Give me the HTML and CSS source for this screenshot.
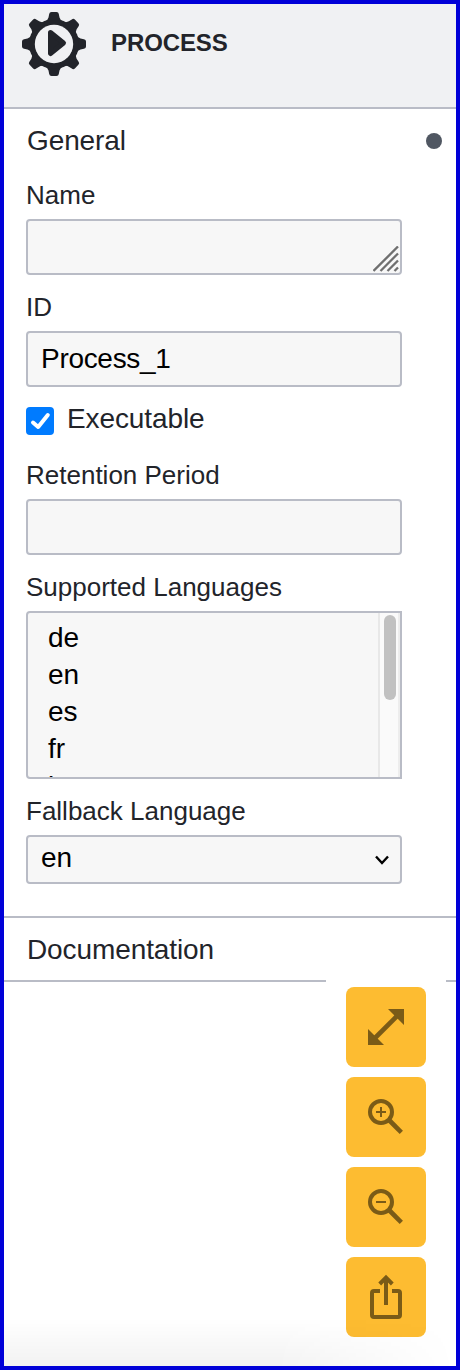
FILE: index.html
```html
<!DOCTYPE html>
<html lang="en">
  <head>
    <meta charset="UTF-8" />
    <meta name="viewport" content="width=device-width, initial-scale=1.0" />
    <title>Process properties</title>
    <link rel="stylesheet" href="styles.css">
  </head>

  <body>
    <div class="panel">
      <header class="panel-header">
        <svg class="gear" viewBox="0 0 64 64" width="64" height="64">
          <g fill="#22242a">
            <g id="teeth">
              <path id="tooth" d="M22.5 10 Q26 8 26.5 5.5 L27.2 2 Q27.5 0 29.5 0 H34.5 Q36.5 0 36.8 2 L37.5 5.5 Q38 8 41.5 10 Z" />
              <use href="#tooth" transform="rotate(45 32 32)" />
              <use href="#tooth" transform="rotate(90 32 32)" />
              <use href="#tooth" transform="rotate(135 32 32)" />
            </g>
            <use href="#teeth" transform="rotate(180 32 32)" />
            <circle cx="32" cy="32" r="25" />
          </g>
          <circle cx="32" cy="32" r="19.2" fill="#f0f1f3" />
          <path d="M28.5 20.5 L41.5 31 L28.5 41.5 Z" fill="#22242a" stroke="#22242a" stroke-width="5" stroke-linejoin="round" />
        </svg>
        <h1>PROCESS</h1>
      </header>

      <section class="group">
        <h2 class="group-title">General <span class="dot"></span></h2>
        <div class="fields">
          <div class="field">
            <label>Name</label>
            <div class="input textarea">
              <svg width="26" height="26" viewBox="0 0 26 26" stroke="#6f6f6f" stroke-width="2.3">
                <path d="M0.5 25 L25 0.5 M7.5 25 L25 7.5 M14.5 25 L25 14.5 M21.5 25 L25 21.5" />
              </svg>
            </div>
          </div>
          <div class="field">
            <label>ID</label>
            <div class="input process-id">Process_1</div>
          </div>
          <div class="field check">
            <span class="checkbox">
              <svg width="28" height="28" viewBox="0 0 28 28" fill="none" stroke="#fff" stroke-width="4" stroke-linecap="round" stroke-linejoin="round">
                <path d="M7 15.5 L12.2 20 L21.8 8" />
              </svg>
            </span>
            <span>Executable</span>
          </div>
          <div class="field">
            <label>Retention Period</label>
            <div class="input"></div>
          </div>
          <div class="field">
            <label>Supported Languages</label>
            <div class="listbox">
              <ul>
                <li>de</li>
                <li>en</li>
                <li>es</li>
                <li>fr</li>
                <li>it</li>
              </ul>
              <div class="track"><div class="thumb"></div></div>
            </div>
          </div>
          <div class="field">
            <label>Fallback Language</label>
            <div class="input select">
              <span>en</span>
              <svg width="16" height="10" viewBox="0 0 16 10" fill="none" stroke="#000" stroke-width="2.4">
                <path d="M2 1.5 L8 8 L14 1.5" />
              </svg>
            </div>
          </div>
        </div>
      </section>

      <section class="group docs">
        <h2 class="group-title">Documentation</h2>
      </section>

      <!-- Floating viewer buttons -->
      <div class="toolbar">
        <button>
          <svg width="80" height="80" viewBox="0 0 80 80" fill="#7a5b17">
            <path d="M42 22 H58 V38 Z M22 42 V58 H38 Z" />
            <path d="M29 51 L51 29" stroke="#7a5b17" stroke-width="4.6" />
          </svg>
        </button>
        <button>
          <svg width="80" height="80" viewBox="0 0 80 80" fill="none" stroke="#7a5b17">
            <circle cx="35" cy="35" r="11" stroke-width="4" />
            <path d="M43.5 43.5 L55.3 55.3" stroke-width="4.6" />
            <path d="M30 35 H40 M35 30 V40" stroke-width="2" />
          </svg>
        </button>
        <button>
          <svg width="80" height="80" viewBox="0 0 80 80" fill="none" stroke="#7a5b17">
            <circle cx="35" cy="35" r="11" stroke-width="4" />
            <path d="M43.5 43.5 L55.3 55.3" stroke-width="4.6" />
            <path d="M30 35 H40" stroke-width="2" />
          </svg>
        </button>
        <button>
          <svg width="80" height="80" viewBox="0 0 80 80" fill="none" stroke="#7a5b17" stroke-width="4">
            <path d="M34 34 H28 Q26 34 26 36 V58 Q26 60 28 60 H52 Q54 60 54 58 V36 Q54 34 52 34 H46" />
            <path d="M40 48 V21 M33.7 27 L40 20.7 L46.3 27" />
          </svg>
        </button>
      </div>
      <div class="fade"></div>
    </div>
  </body>
</html>
```
FILE: styles.css
```css
* {
  box-sizing: border-box;
}
body {
  margin: 0;
  font-family: "Liberation Sans", Arial, sans-serif;
  font-size: 28px;
  color: #22242a;
}
.panel {
  position: relative;
  height: 1370px;
  border: 4px solid #0000d8;
  background-color: #fff;
}
.panel-header {
  display: flex;
  align-items: flex-start;
  height: 105px;
  padding: 8px 18px;
  gap: 25px;
  background-color: #f0f1f3;
  border-bottom: 2px solid #b9bcc6;
}
h1 {
  margin: 0;
  font-size: 24px;
  line-height: 62px;
  letter-spacing: -0.1px;
}
.group-title {
  display: flex;
  align-items: center;
  justify-content: space-between;
  height: 64px;
  margin: 0;
  padding: 0 14px 0 23px;
  font-size: 28px;
  font-weight: normal;
  line-height: 64px;
  letter-spacing: -0.1px;
}
.dot {
  width: 16px;
  height: 16px;
  border-radius: 50%;
  background-color: #505762;
}
.fields {
  width: 398px;
  padding: 6px 0 32px 22px;
}
.field {
  margin-bottom: 16px;
}
.field:last-child {
  margin-bottom: 0;
}
label {
  display: block;
  margin-bottom: 8px;
  font-size: 26px;
  line-height: 32px;
}
.input {
  height: 56px;
  padding: 0 13px;
  border: 2px solid #b9bcc6;
  border-radius: 4px;
  background-color: #f7f7f7;
  color: #000;
  line-height: 52px;
}
.textarea {
  display: flex;
  justify-content: flex-end;
  align-items: flex-end;
  padding: 1px;
}
.process-id {
  letter-spacing: -0.3px;
}
.check {
  display: flex;
  align-items: flex-end;
  gap: 13px;
  margin-bottom: 24px;
  line-height: 32px;
  letter-spacing: -0.1px;
}
.checkbox {
  width: 28px;
  height: 28px;
  border-radius: 4px;
  background-color: #007bff;
}
.checkbox svg {
  display: block;
}
.listbox {
  display: flex;
  justify-content: space-between;
  height: 168px;
  border: 2px solid #b9bcc6;
  border-radius: 4px 0 0 4px;
  background-color: #f7f7f7;
  color: #000;
  overflow: hidden;
}
ul {
  margin: 0;
  padding: 6px 0 0 20px;
  list-style: none;
  line-height: 37px;
}
li:last-child {
  padding-top: 1px;
}
.track {
  width: 22px;
  padding: 2px 2px 0 4px;
  border-left: 2px solid #e8e8e8;
  border-right: 2px solid #ededed;
  background-color: #fafafa;
}
.thumb {
  width: 12px;
  height: 85px;
  border-radius: 6px;
  background-color: #c1c1c1;
}
.select {
  display: flex;
  justify-content: space-between;
  align-items: center;
  height: 49px;
  padding-right: 10px;
  line-height: 45px;
}
.select span {
  padding-bottom: 3px;
  line-height: 42px;
}
.docs {
  height: 66px;
  border-top: 2px solid #b9bcc6;
  border-bottom: 2px solid #b9bcc6;
}
.toolbar {
  position: absolute;
  right: 10px;
  bottom: 19px;
  display: flex;
  flex-direction: column;
  gap: 10px;
  padding: 10px 20px;
  background-color: #fff;
}
button {
  width: 80px;
  height: 80px;
  padding: 0;
  border: none;
  border-radius: 8px;
  background-color: #fdbc31;
}
button svg {
  display: block;
}
.fade {
  position: absolute;
  left: 0;
  right: 0;
  bottom: 0;
  height: 48px;
  background: linear-gradient(to bottom, rgba(0, 0, 0, 0), rgba(0, 0, 0, 0.05));
  -webkit-mask-image: linear-gradient(to right, #000 60%, transparent);
  mask-image: linear-gradient(to right, #000 60%, transparent);
}
```
